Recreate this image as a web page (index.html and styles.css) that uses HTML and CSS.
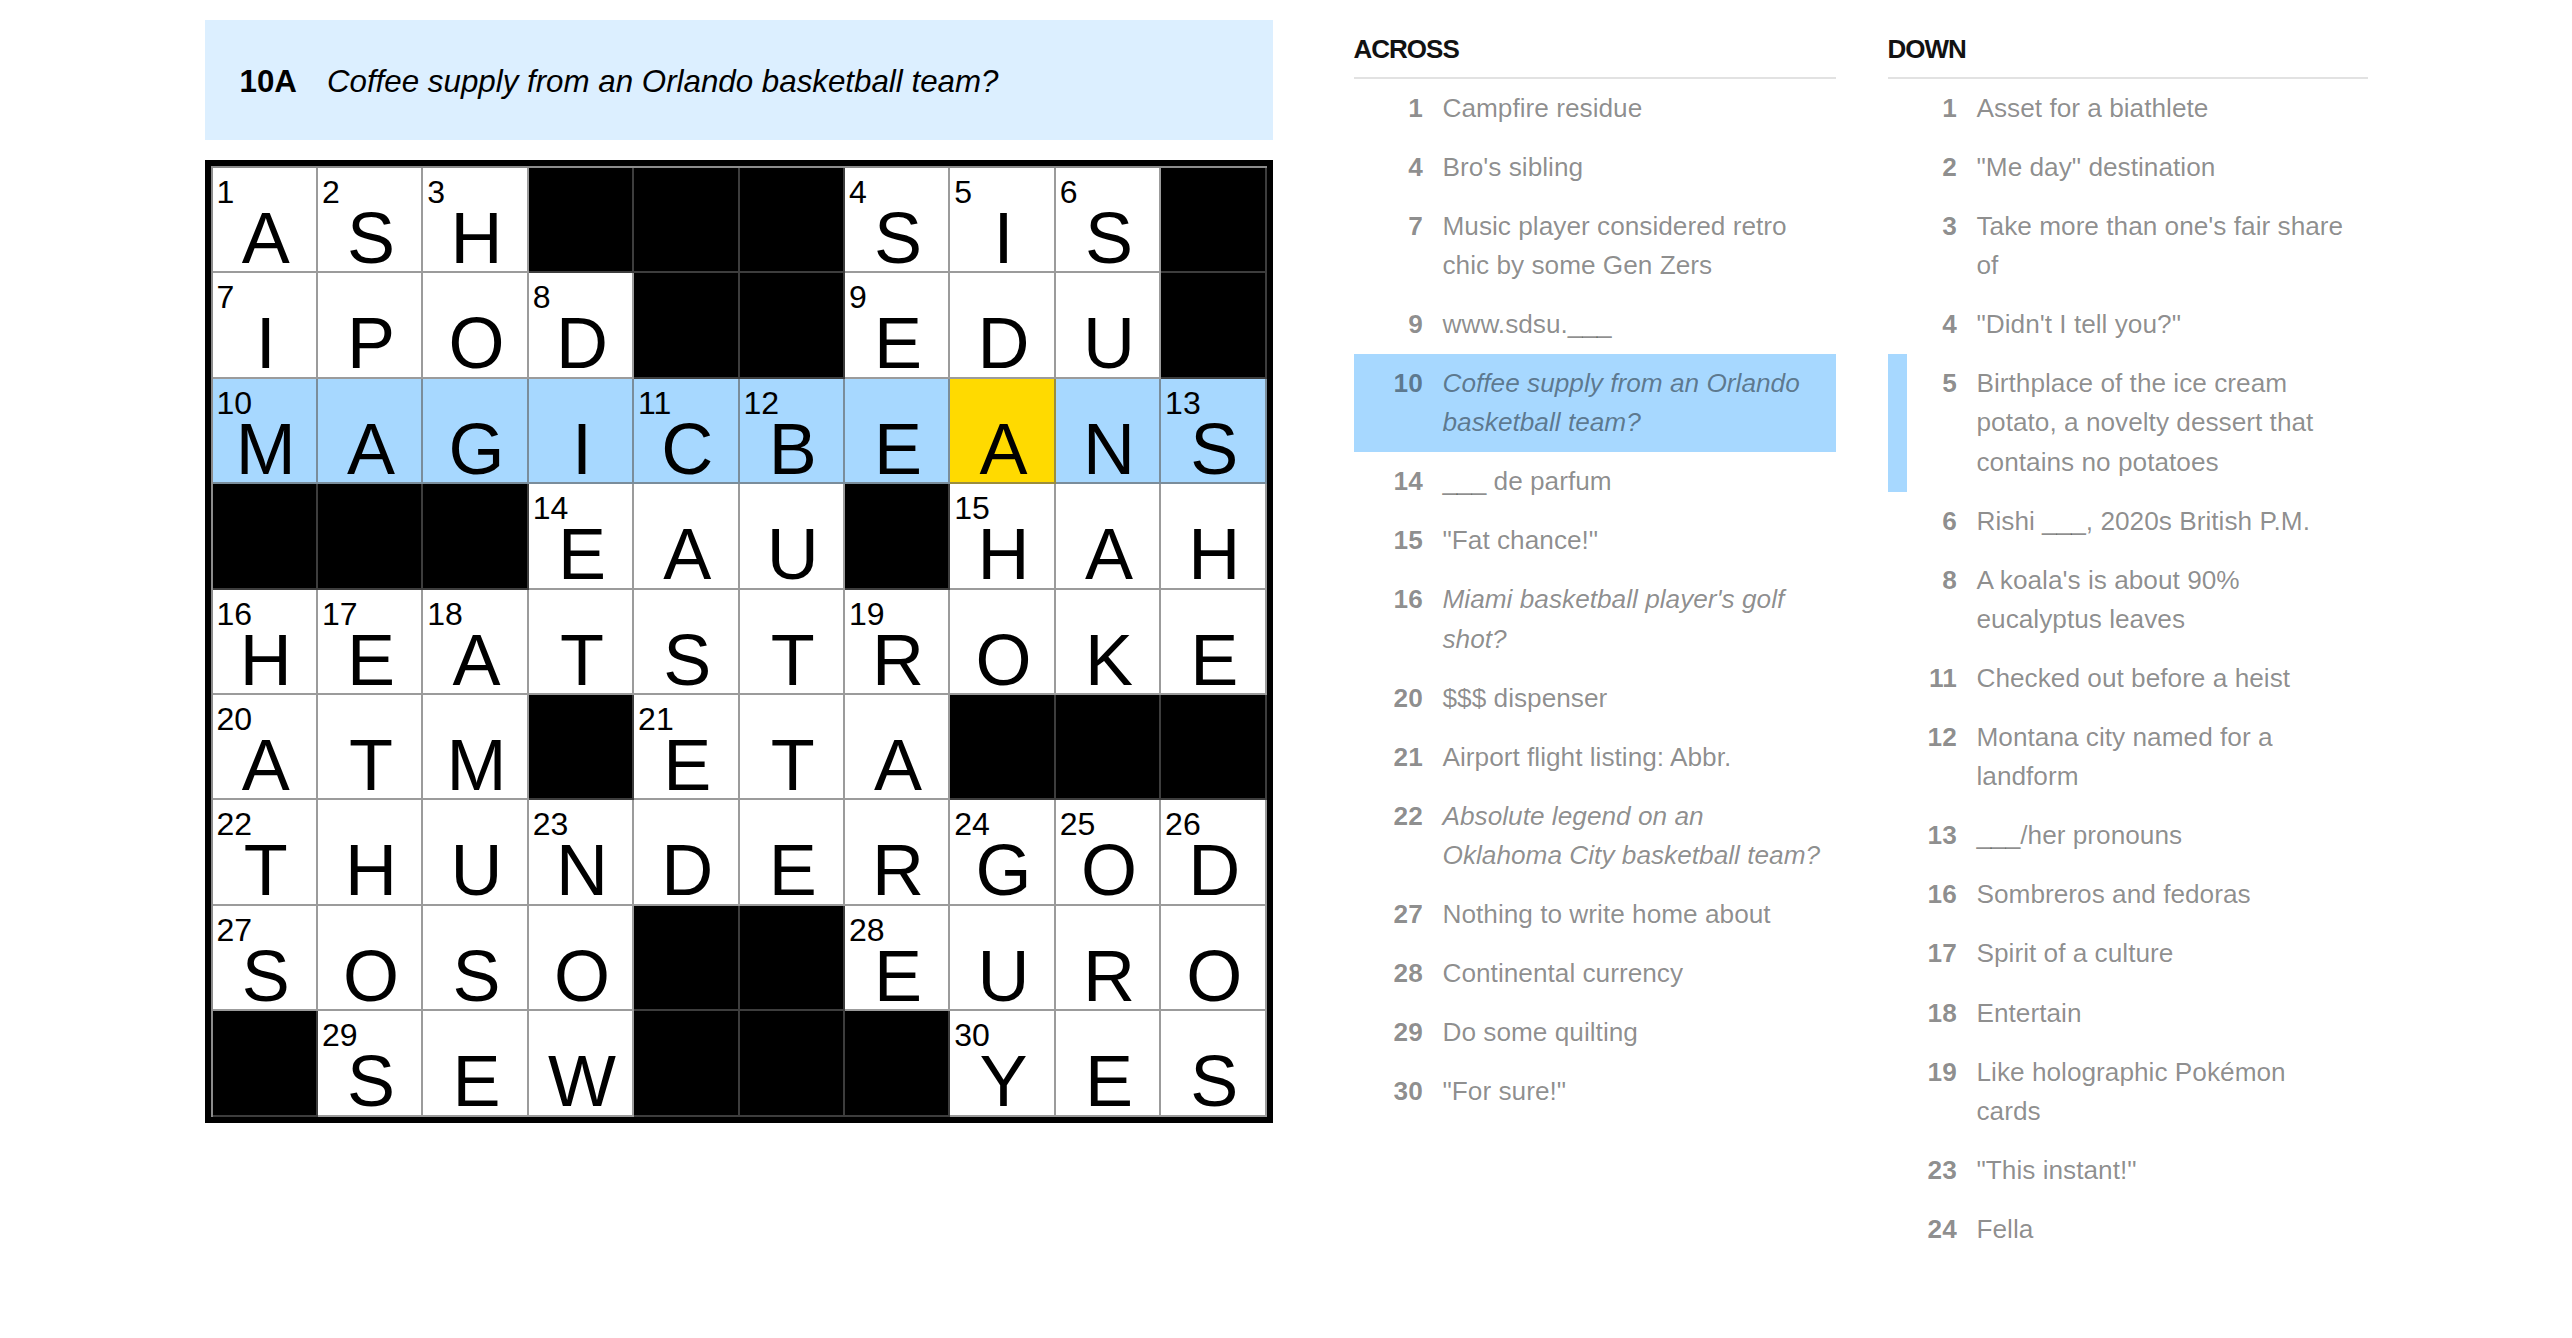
FILE: index.html
```html
<!DOCTYPE html>
<html lang="en">

<head>
  <meta charset="UTF-8" />
  <meta name="viewport" content="width=device-width, initial-scale=1.0" />
  <title>Crossword</title>
  <link rel="stylesheet" href="styles.css">
</head>

<body>
  <main class="puzzle">

    <section class="board-col">
      <div class="clue-bar">
        <span class="clue-bar-num">10A</span>
        <span class="clue-bar-text">Coffee supply from an Orlando basketball team?</span>
      </div>
      <div class="board"></div>
    </section>

    <section class="clue-col across">
      <h3>ACROSS</h3>
      <ol>
        <li class="clue"><span class="clue-num">1</span><span class="clue-text">Campfire residue</span></li>
        <li class="clue"><span class="clue-num">4</span><span class="clue-text">Bro's sibling</span></li>
        <li class="clue"><span class="clue-num">7</span><span class="clue-text">Music player considered retro chic by some Gen Zers</span></li>
        <li class="clue"><span class="clue-num">9</span><span class="clue-text">www.sdsu.___</span></li>
        <li class="clue active"><span class="clue-num">10</span><span class="clue-text theme">Coffee supply from an Orlando basketball team?</span></li>
        <li class="clue"><span class="clue-num">14</span><span class="clue-text">___ de parfum</span></li>
        <li class="clue"><span class="clue-num">15</span><span class="clue-text">"Fat chance!"</span></li>
        <li class="clue"><span class="clue-num">16</span><span class="clue-text theme">Miami basketball player's golf shot?</span></li>
        <li class="clue"><span class="clue-num">20</span><span class="clue-text">$$$ dispenser</span></li>
        <li class="clue"><span class="clue-num">21</span><span class="clue-text">Airport flight listing: Abbr.</span></li>
        <li class="clue"><span class="clue-num">22</span><span class="clue-text theme">Absolute legend on an Oklahoma City basketball team?</span></li>
        <li class="clue"><span class="clue-num">27</span><span class="clue-text">Nothing to write home about</span></li>
        <li class="clue"><span class="clue-num">28</span><span class="clue-text">Continental currency</span></li>
        <li class="clue"><span class="clue-num">29</span><span class="clue-text">Do some quilting</span></li>
        <li class="clue"><span class="clue-num">30</span><span class="clue-text">"For sure!"</span></li>
      </ol>
    </section>

    <section class="clue-col down">
      <h3>DOWN</h3>
      <ol>
        <li class="clue"><span class="clue-num">1</span><span class="clue-text">Asset for a biathlete</span></li>
        <li class="clue"><span class="clue-num">2</span><span class="clue-text">"Me day" destination</span></li>
        <li class="clue"><span class="clue-num">3</span><span class="clue-text">Take more than one's fair share of</span></li>
        <li class="clue"><span class="clue-num">4</span><span class="clue-text">"Didn't I tell you?"</span></li>
        <li class="clue related"><span class="clue-num">5</span><span class="clue-text">Birthplace of the ice cream potato, a novelty dessert that contains no potatoes</span></li>
        <li class="clue"><span class="clue-num">6</span><span class="clue-text">Rishi ___, 2020s British P.M.</span></li>
        <li class="clue"><span class="clue-num">8</span><span class="clue-text">A koala's is about 90% eucalyptus leaves</span></li>
        <li class="clue"><span class="clue-num">11</span><span class="clue-text">Checked out before a heist</span></li>
        <li class="clue"><span class="clue-num">12</span><span class="clue-text">Montana city named for a landform</span></li>
        <li class="clue"><span class="clue-num">13</span><span class="clue-text">___/her pronouns</span></li>
        <li class="clue"><span class="clue-num">16</span><span class="clue-text">Sombreros and fedoras</span></li>
        <li class="clue"><span class="clue-num">17</span><span class="clue-text">Spirit of a culture</span></li>
        <li class="clue"><span class="clue-num">18</span><span class="clue-text">Entertain</span></li>
        <li class="clue"><span class="clue-num">19</span><span class="clue-text">Like holographic Pokémon cards</span></li>
        <li class="clue"><span class="clue-num">23</span><span class="clue-text">"This instant!"</span></li>
        <li class="clue"><span class="clue-num">24</span><span class="clue-text">Fella</span></li>
      </ol>
    </section>

  </main>

  <script>
    // # = black square
    const rows = [
      'ASH###SIS#',
      'IPOD##EDU#',
      'MAGICBEANS',
      '###EAU#HAH',
      'HEATSTROKE',
      'ATM#ETA###',
      'THUNDERGOD',
      'SOSO##EURO',
      '#SEW###YES'
    ]

    // current word is row 3, cursor on the A of BEANS
    const activeRow = 2
    const activeCol = 7

    const board = document.querySelector('.board')
    const isOpen = (r, c) => r >= 0 && r < rows.length && c >= 0 && c < 10 && rows[r][c] !== '#'

    let num = 0
    rows.forEach((row, r) => {
      row.split('').forEach((ch, c) => {
        const cell = document.createElement('div')
        cell.className = 'cell'

        if (ch === '#') {
          cell.classList.add('block')
          board.appendChild(cell)
          return
        }

        if (r === activeRow) cell.classList.add('word')
        if (r === activeRow && c === activeCol) cell.classList.add('selected')

        // numbered if it starts an across or a down entry
        const startsAcross = !isOpen(r, c - 1) && isOpen(r, c + 1)
        const startsDown = !isOpen(r - 1, c) && isOpen(r + 1, c)
        if (startsAcross || startsDown) {
          num++
          const n = document.createElement('span')
          n.className = 'cell-num'
          n.innerText = num
          cell.appendChild(n)
        }

        const letter = document.createElement('span')
        letter.className = 'cell-letter'
        letter.innerText = ch
        cell.appendChild(letter)

        board.appendChild(cell)
      })
    })
  </script>
</body>

</html>
```

FILE: styles.css
```css
* {
  box-sizing: border-box;
}

body {
  margin: 0;
  background: #fff;
  color: #121212;
  font-family: "Liberation Sans", Arial, sans-serif;
}

.puzzle {
  width: 2163px;
  margin: 0 auto;
  padding-top: 20px;
  display: flex;
  align-items: flex-start;
}

/* left side: current clue + grid */
.board-col {
  width: 1068px;
  flex-shrink: 0;
}

.clue-bar {
  height: 120px;
  padding: 3px 35px 0;
  background: #dcefff;
  display: flex;
  align-items: center;
  font-size: 31.3px;
  color: #000;
}

.clue-bar-num {
  font-weight: bold;
  margin-right: 30px;
}

.clue-bar-text {
  font-style: italic;
}

.board {
  margin-top: 20px;
  border: 6px solid #000;
  padding: 2px 0 0 2px;
  background: #8c8c8c;
  display: grid;
  grid-template-columns: repeat(10, 1fr);
  grid-auto-rows: 105.4px;
}

.cell {
  position: relative;
  background: #fff;
  border-right: 2px solid rgba(96, 96, 96, 0.63);
  border-bottom: 2px solid rgba(96, 96, 96, 0.63);
  color: #000;
}

.cell.block {
  background: #000;
}

.cell.word {
  background: #a7d8ff;
}

.cell.selected {
  background: #ffda00;
}

/* number sits in the top-left corner, letter below it */
.cell-num {
  position: absolute;
  top: 8px;
  left: 4px;
  font-size: 32px;
  line-height: 32px;
}

.cell-letter {
  position: absolute;
  top: 41px;
  left: 0;
  right: 0;
  padding-left: 3px;
  text-align: center;
  font-size: 72px;
  line-height: 58px;
}

/* right side: clue lists */
.clue-col {
  flex-shrink: 0;
}

.across {
  width: 482px;
  margin-left: 81px;
}

.down {
  width: 480px;
  margin-left: 52px;
}

.clue-col h3 {
  margin: 13.7px 0 0;
  padding-bottom: 13px;
  border-bottom: 2px solid #e2e2e2;
  font-size: 26px;
  line-height: 30px;
  letter-spacing: -1px;
  font-weight: bold;
}

.clue-col ol {
  margin: 0;
  padding: 0;
  list-style: none;
}

.clue {
  display: flex;
  padding: 9.84px 0;
  border-left: 19.7px solid transparent;
  font-size: 26.24px;
  line-height: 39.36px;
  color: rgba(0, 0, 0, 0.46);
}

.clue-num {
  flex: 0 0 50.3px;
  margin-right: 19.7px;
  text-align: right;
  font-weight: bold;
}

.clue-text {
  flex: 0 0 379px;
}

.clue-text.theme {
  font-style: italic;
}

.clue.active {
  background: #a7d8ff;
}

.clue.related {
  border-left-color: #a7d8ff;
}
```
